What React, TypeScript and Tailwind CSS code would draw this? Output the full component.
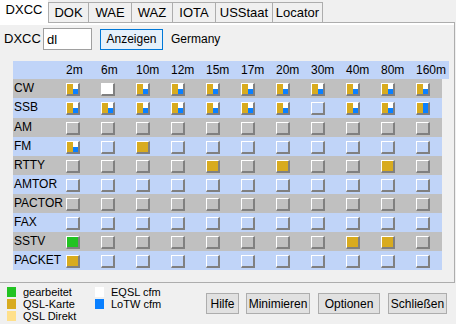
import React from "react";

// M = QSL+EQSL+LoTW, E = nur EQSL, Q = QSL-Karte, W = gearbeitet, B = QSL+LoTW
type Cell = "" | "M" | "E" | "Q" | "W" | "B";

const BANDS = ["2m", "6m", "10m", "12m", "15m", "17m", "20m", "30m", "40m", "80m", "160m"];

const E11: Cell[] = ["", "", "", "", "", "", "", "", "", "", ""];

const ROWS: { mode: string; cells: Cell[]; h?: string }[] = [
  { mode: "CW", cells: ["M", "E", "M", "M", "M", "M", "M", "M", "M", "M", "M"] },
  { mode: "SSB", cells: ["M", "M", "M", "M", "M", "M", "M", "", "M", "M", "B"], h: "h-[20px]" },
  { mode: "AM", cells: E11 },
  { mode: "FM", cells: ["M", "", "Q", "", "", "", "", "", "", "", ""] },
  { mode: "RTTY", cells: ["", "", "", "", "Q", "", "Q", "", "", "Q", ""] },
  { mode: "AMTOR", cells: E11 },
  { mode: "PACTOR", cells: E11 },
  { mode: "FAX", cells: E11 },
  { mode: "SSTV", cells: ["W", "", "", "", "", "", "", "", "Q", "Q", ""] },
  { mode: "PACKET", cells: ["Q", "", "", "", "", "", "", "", "", "", ""] },
];

const TABS = [
  { label: "DOK", w: "w-[40px]" },
  { label: "WAE", w: "w-[43px]" },
  { label: "WAZ", w: "w-[41px]" },
  { label: "IOTA", w: "w-[43px]" },
  { label: "USStaat", w: "w-[57px]" },
  { label: "Locator", w: "w-[51px]" },
];

function Box({ v }: { v: Cell }) {
  return (
    <div className="w-[14px] h-[13px] border-t border-l border-t-white border-l-white border-r-2 border-b-2 border-r-[#808080] border-b-[#808080] flex">
      {v === "M" && (
        <>
          <div className="w-[6px] bg-[#d8ab1f]" />
          <div className="flex-1 flex flex-col">
            <div className="flex-1 bg-white" />
            <div className="flex-1 bg-[#0a80ff]" />
          </div>
        </>
      )}
      {v === "B" && (
        <>
          <div className="w-[6px] bg-[#d8ab1f]" />
          <div className="flex-1 bg-[#0a80ff]" />
        </>
      )}
      {v === "E" && <div className="flex-1 bg-white" />}
      {v === "Q" && <div className="flex-1 bg-[#d8ab1f]" />}
      {v === "W" && <div className="flex-1 bg-[#22c322]" />}
    </div>
  );
}

function Legend({ color, label }: { color: string; label: string }) {
  return (
    <div className="flex items-center h-[12px]">
      <div className={`w-[9px] h-[10px] ${color}`} />
      <span className="ml-[7px] text-[11px] leading-[12px]">{label}</span>
    </div>
  );
}

export default function App() {
  return (
    <div className="w-[456px] h-[324px] bg-[#f0f0f0] text-black text-[12px] font-['Liberation_Sans',Arial,sans-serif] overflow-hidden">
      {/* Reiter */}
      <div className="flex items-start h-[22px]">
        <div className="relative z-10 w-[48px] h-[25px] bg-white flex justify-center pt-[3px] leading-[14px] text-[13px]">
          DXCC
        </div>
        {TABS.map((t, i) => (
          <div
            key={t.label}
            className={`${t.w} mt-[2px] h-[20px] border-t border-l border-[#adadad] ${
              i === TABS.length - 1 ? "border-r" : ""
            } bg-[#f0f0f0] flex items-center justify-center text-[13px]`}
          >
            {t.label}
          </div>
        ))}
      </div>

      {/* Reiterseite */}
      <div className="w-[455px] h-[261px] border-t border-r border-b border-[#adadad]">
        <div className="h-full border-t-2 border-white">
          <div className="flex items-center mt-[3px] pl-[4px]">
            <span className="w-[39px] text-[13px]">DXCC</span>
            <input
              defaultValue="dl"
              className="w-[49px] h-[22px] border border-[#a0a0a0] bg-white pl-[3px] text-[13px] outline-none"
            />
            <button className="ml-[8px] w-[63px] h-[21px] border border-[#0078d7] bg-[#e5f1fb] text-[12px]">
              Anzeigen
            </button>
            <span className="ml-[8px] text-[12px]">Germany</span>
          </div>

          <div className="mt-[11px] ml-[13px]">
            <div className="flex items-center h-[18px] w-fit bg-[#c0d4f8] pr-[3px]">
              <div className="w-[53px]" />
              {BANDS.map((b, i) => (
                <div key={b} className={i === BANDS.length - 1 ? "" : "w-[35px]"}>
                  {b}
                </div>
              ))}
            </div>
            {ROWS.map((r, ri) => (
              <div
                key={r.mode}
                className={`flex w-[429px] ${r.h ?? "h-[19px]"} ${
                  ri % 2 === 0 ? "bg-[#c0c0c0]" : "bg-[#c0d4f8]"
                }`}
              >
                <div className="w-[53px] pl-[1px] leading-[19px]">{r.mode}</div>
                {r.cells.map((c, ci) => (
                  <div key={ci} className={`${ci === 10 ? "w-[26px]" : "w-[35px]"} pt-[4px]`}>
                    <Box v={c} />
                  </div>
                ))}
              </div>
            ))}
          </div>
        </div>
      </div>

      {/* Legende und Knoepfe */}
      <div className="flex">
        <div className="flex pl-[7px] pt-[3px]">
          <div className="w-[88px]">
            <Legend color="bg-[#22c322]" label="gearbeitet" />
            <Legend color="bg-[#d8ab1f]" label="QSL-Karte" />
            <Legend color="bg-[#ffe08a]" label="QSL Direkt" />
          </div>
          <div>
            <Legend color="bg-white" label="EQSL cfm" />
            <Legend color="bg-[#0a80ff]" label="LoTW cfm" />
          </div>
        </div>
        <div className="ml-auto mr-[9px] mt-[10px] flex">
          <button className="w-[33px] h-[21px] border border-[#adadad] bg-[#e1e1e1]">Hilfe</button>
          <button className="ml-[7px] w-[64px] h-[21px] border border-[#adadad] bg-[#e1e1e1]">Minimieren</button>
          <button className="ml-[8px] w-[62px] h-[21px] border border-[#adadad] bg-[#e1e1e1]">Optionen</button>
          <button className="ml-[8px] w-[59px] h-[21px] border border-[#adadad] bg-[#e1e1e1]">Schließen</button>
        </div>
      </div>
    </div>
  );
}
